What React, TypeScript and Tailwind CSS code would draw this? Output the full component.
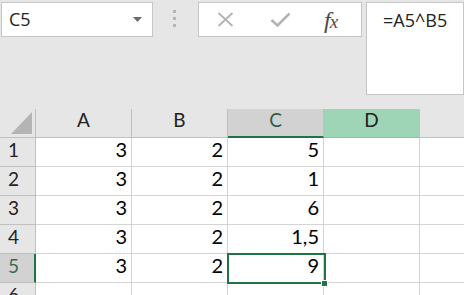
import { Fragment } from 'react'

const rows: [number, string, string, string][] = [
  [1, '3', '2', '5'],
  [2, '3', '2', '1'],
  [3, '3', '2', '6'],
  [4, '3', '2', '1,5'],
  [5, '3', '2', '9'],
  [6, '', '', ''],
]

const cellFont = { fontFamily: 'Lato, "Open Sans", sans-serif' }
const uiFont = { fontFamily: '"Open Sans", "Noto Sans", sans-serif' }

function FormulaBar() {
  return (
    <div className="flex items-start h-[109px] pt-[2px] bg-[#e6e6e6]">
      <div className="ml-[1px] w-[152px] h-[35px] bg-white border border-[#c6c6c6] flex items-center justify-between pl-[7px] pr-[10px]">
        <span className="text-[18px] text-[#222]" style={uiFont}>C5</span>
        <svg width="9" height="5" viewBox="0 0 9 5"><path d="M0 0h9L4.5 5z" fill="#6b6b6b" /></svg>
      </div>
      <div className="w-[45px] flex flex-col items-center gap-[4px] pt-[8px] pr-[3px]">
        <div className="w-[3px] h-[3px] bg-[#b5b5b5]" />
        <div className="w-[3px] h-[3px] bg-[#b5b5b5]" />
        <div className="w-[3px] h-[3px] bg-[#b5b5b5]" />
      </div>
      <div className="w-[164px] h-[35px] bg-white border border-[#c6c6c6] flex items-center">
        <svg className="ml-[18px]" width="17" height="15" viewBox="0 0 17 15">
          <path d="M1.5 1l14 13M15.5 1l-14 13" stroke="#b3b3b3" strokeWidth="1.8" />
        </svg>
        <svg className="ml-[36px]" width="21" height="15" viewBox="0 0 21 15">
          <path d="M1.5 8l6 5.5L19.5 1.5" stroke="#b3b3b3" strokeWidth="2.6" fill="none" />
        </svg>
        <span className="ml-[33px] text-[24px] italic text-[#4a4a4a] leading-none tracking-[-1px]" style={{ fontFamily: '"Liberation Serif", serif' }}>
          f<span className="text-[19px]">x</span>
        </span>
      </div>
      <div className="ml-[4px] flex-1 h-[93px] bg-white border border-[#c6c6c6] pl-[16px] pt-[4px]">
        <span className="text-[18px] text-[#222]" style={uiFont}>=A5^B5</span>
      </div>
    </div>
  )
}

function App() {
  return (
    <div className="w-[464px] h-[295px] overflow-hidden bg-white">
      <FormulaBar />
      <div className="grid grid-cols-[36px_96px_96px_96px_96px_44px] auto-rows-[29px] relative" style={cellFont}>
        <div className="bg-[#e6e6e6] border-r border-b border-[#c0c0c0] flex items-end justify-end pr-[3px] pb-[3px]">
          <svg width="21" height="22" viewBox="0 0 21 22"><path d="M21 0v22H0z" fill="#b4b4b4" /></svg>
        </div>
        <div className="bg-[#e6e6e6] border-r border-b border-[#c0c0c0] flex items-end justify-center pb-[3px] text-[19px] text-[#222]">A</div>
        <div className="bg-[#e6e6e6] border-r border-b border-[#c0c0c0] flex items-end justify-center pb-[3px] text-[19px] text-[#222]">B</div>
        <div className="bg-[#d2d2d2] border-r border-[#c0c0c0] border-b-2 border-b-[#217346] flex items-end justify-center pb-[2px] text-[19px] text-[#2e5c45]">C</div>
        <div className="bg-[#9fd5b7] border-r border-b border-[#c0c0c0] border-b-[#9ab8a8] flex items-end justify-center pb-[3px] text-[19px] text-[#222]">D</div>
        <div className="bg-[#e6e6e6] border-b border-[#c0c0c0]" />
        {rows.map(([n, a, b, c]) => (
          <Fragment key={n}>
            <div
              className={
                n === 5
                  ? 'bg-[#d2d2d2] border-r-2 border-r-[#217346] border-b border-b-[#c0c0c0] flex items-end pl-[8px] pb-[2px] text-[19px] text-[#3c6a52]'
                  : 'bg-[#e6e6e6] border-r border-b border-[#c0c0c0] flex items-end pl-[8px] pb-[2px] text-[19px] text-[#222]'
              }
            >
              {n}
            </div>
            <div className="border-r border-b border-[#d4d4d4] flex items-end justify-end pr-[4px] pb-[2px] text-[20px] text-black">{a}</div>
            <div className="border-r border-b border-[#d4d4d4] flex items-end justify-end pr-[4px] pb-[2px] text-[20px] text-black">{b}</div>
            <div className="border-r border-b border-[#d4d4d4] flex items-end justify-end pr-[4px] pb-[2px] text-[20px] text-black">{c}</div>
            <div className="border-r border-b border-[#d4d4d4]" />
            <div className="border-b border-[#d4d4d4]" />
          </Fragment>
        ))}
        <div className="absolute left-[227px] top-[144px] w-[99px] h-[31px] border-2 border-[#217346] pointer-events-none" />
        <div className="absolute left-[321px] top-[171px] w-[7px] h-[7px] bg-[#217346] border border-white" />
      </div>
    </div>
  )
}

export default App
